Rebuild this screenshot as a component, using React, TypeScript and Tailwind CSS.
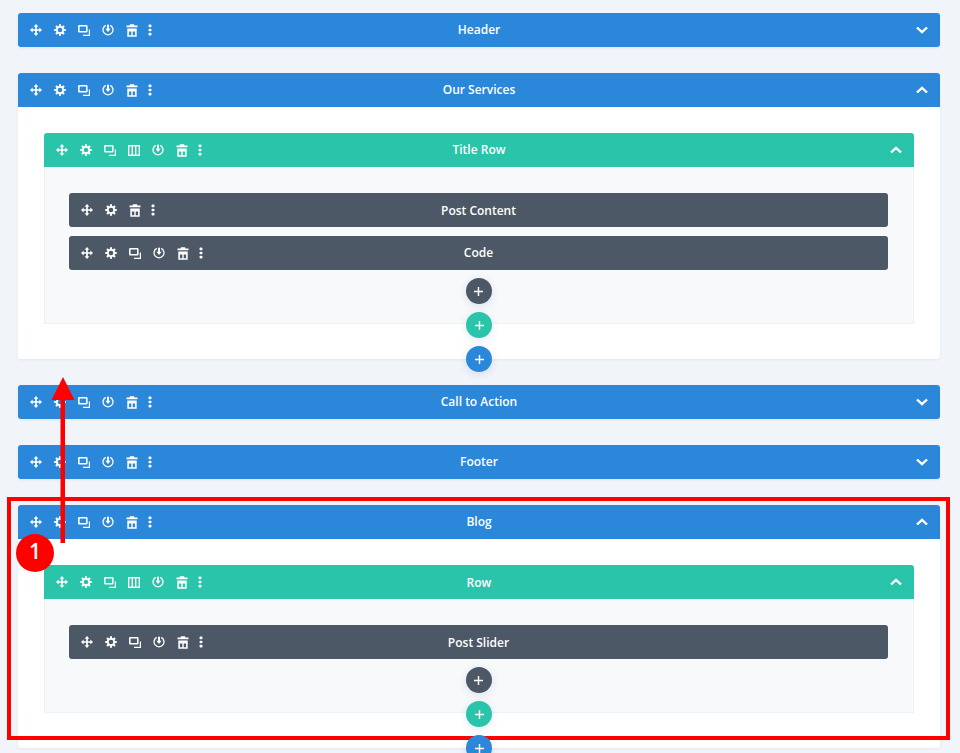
import React from "react";

const Move = () => (
  <svg viewBox="0 0 14 14" className="w-3 h-3 block" fill="white">
    <path d="M7 0 L9.8 3.1 H8 V6 H10.9 V4.2 L14 7 L10.9 9.8 V8 H8 V10.9 H9.8 L7 14 L4.2 10.9 H6 V8 H3.1 V9.8 L0 7 L3.1 4.2 V6 H6 V3.1 H4.2 Z" />
  </svg>
);
const Gear = () => (
  <svg viewBox="0 0 14 14" className="w-3 h-3 block">
    <g stroke="white" strokeWidth="2.4">
      <path d="M7 0.3V3M7 11V13.7M0.3 7H3M11 7H13.7M2.3 2.3L4.2 4.2M9.8 9.8L11.7 11.7M2.3 11.7L4.2 9.8M9.8 4.2L11.7 2.3" />
    </g>
    <circle cx="7" cy="7" r="3.7" fill="none" stroke="white" strokeWidth="2" />
  </svg>
);
const Copy = () => (
  <svg viewBox="0 0 12 11" className="w-3 h-[11px] block" fill="none" stroke="white">
    <rect x="0.8" y="0.8" width="8" height="6" rx="0.5" strokeWidth="1.6" />
    <path d="M11.4 4.5V10.4H5" strokeWidth="1.2" />
  </svg>
);
const Power = () => (
  <svg viewBox="0 0 14 14" className="w-3 h-3 block" fill="none" stroke="white">
    <path d="M4.4 1.6A5.8 5.8 0 1 0 9.6 1.6" strokeWidth="1.5" />
    <path d="M7 0.8V6.5" strokeWidth="2.4" />
    <path d="M3.9 5.4H10.1L7 9.4Z" fill="white" stroke="none" />
  </svg>
);
const Trash = () => (
  <svg viewBox="0 0 12 13" className="w-3 h-[13px] block" fill="white">
    <path d="M4 0.3H8L8.5 1.6H11.5V3.2H0.5V1.6H3.5Z" />
    <path fillRule="evenodd" d="M1.3 4.4H10.7V12.8H1.3ZM2.9 7.4V11.3H5.3V7.4ZM6.7 7.4V11.3H9.1V7.4Z" />
  </svg>
);
const Dots = () => (
  <svg viewBox="0 0 4 12" className="w-1 h-3 block" fill="white">
    <rect x="0.5" y="0.6" width="3" height="2.6" rx="1" />
    <rect x="0.5" y="4.7" width="3" height="2.6" rx="1" />
    <rect x="0.5" y="8.8" width="3" height="2.6" rx="1" />
  </svg>
);
const Cols = () => (
  <svg viewBox="0 0 12 11" className="w-3 h-[11px] block" fill="none" stroke="white" strokeWidth="1.4">
    <rect x="0.7" y="0.7" width="10.6" height="9.6" />
    <path d="M4.3 1V10M7.7 1V10" />
  </svg>
);
const Chevron = ({ up }: { up: boolean }) => (
  <svg viewBox="0 0 12 8" className={up ? "w-3 h-2 block rotate-180" : "w-3 h-2 block"} fill="none" stroke="white" strokeWidth="2.4">
    <path d="M1 1.5L6 6.2L11 1.5" />
  </svg>
);

const Slot = ({ children }: { children: React.ReactNode }) => (
  <span className="w-6 h-6 flex items-center justify-center">{children}</span>
);

type Kind = "move" | "gear" | "copy" | "cols" | "power" | "trash";
const map: Record<Kind, () => React.ReactElement> = { move: Move, gear: Gear, copy: Copy, cols: Cols, power: Power, trash: Trash };

function Bar({ title, color, icons, chevron, rounded, low }: { title: string; color: string; icons: Kind[]; chevron?: "up" | "down"; rounded: string; low?: boolean }) {
  return (
    <div className={`relative h-[34px] flex items-center pl-[6px] pr-[12px] ${color} ${rounded}`}>
      <div className="flex items-center">
        {icons.map((k, i) => {
          const I = map[k];
          return <Slot key={i}><I /></Slot>;
        })}
        <span className="w-3 flex justify-center"><Dots /></span>
      </div>
      <div className="flex-1" />
      {chevron && <Chevron up={chevron === "up"} />}
      <span className={low ? "absolute inset-0 pt-[2px] flex items-center justify-center text-white text-[12px] font-semibold" : "absolute inset-0 flex items-center justify-center text-white text-[12px] font-semibold"}>{title}</span>
    </div>
  );
}

const Plus = ({ color }: { color: string }) => (
  <div className={`relative z-10 w-[26px] h-[26px] rounded-full ${color} flex items-center justify-center shadow-[0_2px_8px_rgba(43,87,151,0.14)]`}>
    <svg viewBox="0 0 10 10" className="w-[9px] h-[9px] block" stroke="white" strokeWidth="1.6"><path d="M5 0V10M0 5H10" /></svg>
  </div>
);

const secIcons: Kind[] = ["move", "gear", "copy", "power", "trash"];
const rowIcons: Kind[] = ["move", "gear", "copy", "cols", "power", "trash"];
const BLUE = "bg-[#2b87da]";
const TEAL = "bg-[#29c4a9]";
const GREY = "bg-[#4c5866]";

const Collapsed = ({ title }: { title: string }) => (
  <div className="mb-[26px] shadow-[0_1px_3px_rgba(43,87,151,0.08)] rounded-[3px]">
    <Bar title={title} color={BLUE} icons={secIcons} chevron="down" rounded="rounded-[3px]" />
  </div>
);

function Expanded({ title, rowTitle, rowLow, modules }: { title: string; rowTitle: string; rowLow?: boolean; modules: { t: string; i: Kind[]; g: string; low?: boolean }[] }) {
  return (
    <div className="mb-[26px]">
      <div className="bg-white rounded-[3px] shadow-[0_1px_3px_rgba(43,87,151,0.08)]">
        <Bar title={title} color={BLUE} icons={secIcons} chevron="up" rounded="rounded-t-[3px]" />
        <div className="px-[26px] pt-[26px] pb-[34px]">
          <Bar title={rowTitle} color={TEAL} icons={rowIcons} chevron="up" rounded="rounded-t-[3px]" low={rowLow} />
          <div className="bg-[#f7f9fb] border-x border-b border-[#eef1f6] pt-[26px] pl-[24px] pr-[25px] pb-[19px] bg-[radial-gradient(#eef1f6_0.5px,transparent_0.5px)] bg-[length:4px_4px]">
            <div className="flex flex-col">
              {modules.map((m) => (
                <div key={m.t} className={m.g}>
                  <Bar title={m.t} color={GREY} icons={m.i} rounded="rounded-[3px]" low={m.low} />
                </div>
              ))}
            </div>
            <div className="flex justify-center"><Plus color={GREY} /></div>
          </div>
          <div className="flex justify-center -mt-[12px] -mb-[13px]"><Plus color={TEAL} /></div>
        </div>
      </div>
      <div className="flex justify-center -mt-[13px] -mb-[13px]"><Plus color={BLUE} /></div>
    </div>
  );
}

export default function App() {
  return (
    <div className="relative h-[753px] overflow-hidden bg-[#f1f4f9] pl-[18px] pr-[20px] pt-[13px] [font-family:'Open_Sans',sans-serif]">
      <Collapsed title="Header" />
      <Expanded
        title="Our Services"
        rowTitle="Title Row"
        modules={[
          { t: "Post Content", i: ["move", "gear", "trash"], g: "mb-[9px]", low: true },
          { t: "Code", i: secIcons, g: "mb-[8px]" },
        ]}
      />
      <Collapsed title="Call to Action" />
      <Collapsed title="Footer" />
      <Expanded
        title="Blog"
        rowTitle="Row"
        rowLow
        modules={[{ t: "Post Slider", i: secIcons, g: "mb-[8px]", low: true }]}
      />

      {/* annotation overlay */}
      <div className="absolute left-[7px] top-[497px] w-[943px] h-[243px] border-[4px] border-[#ff0000]" />
      <svg className="absolute left-[40px] top-[370px] w-[50px] h-[180px]" viewBox="0 0 50 180" fill="#ff0000">
        <rect x="20.5" y="30" width="4.5" height="143" />
        <path d="M23 7L34.5 30H11.5Z" />
      </svg>
      <div className="absolute left-[16px] top-[534px] w-[38px] h-[38px] rounded-full bg-[#ff0000] text-white flex items-center justify-center pb-[3px] text-[21px] font-semibold [font-family:'Open_Sans',sans-serif]">1</div>
    </div>
  );
}
